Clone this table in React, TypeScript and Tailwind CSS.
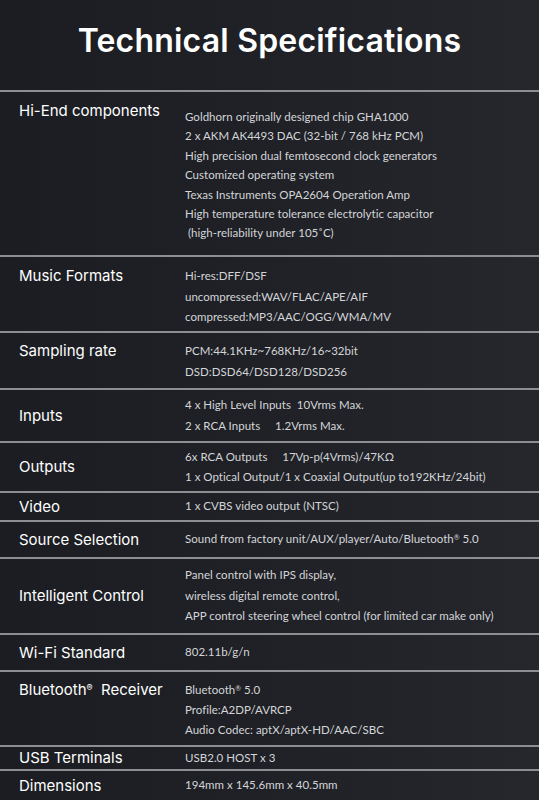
import React from "react";

type Row = {
  label: React.ReactNode;
  values: React.ReactNode[];
  h: string;
  align: "top" | "center";
  pt?: string;
  lh?: string;
  vpt?: string;
};

const rows: Row[] = [
  {
    label: "Hi-End components",
    values: [
      "Goldhorn originally designed chip GHA1000",
      "2 x AKM AK4493 DAC (32-bit / 768 kHz PCM)",
      "High precision dual femtosecond clock generators",
      "Customized operating system",
      "Texas Instruments OPA2604 Operation Amp",
      "High temperature tolerance electrolytic capacitor",
      " (high-reliability under 105˚C)",
    ],
    h: "h-[165px]",
    align: "top",
    pt: "pt-[9px]",
    lh: "leading-[19.4px]",
    vpt: "pt-[6px]",
  },
  {
    label: "Music Formats",
    values: [
      "Hi-res:DFF/DSF",
      "uncompressed:WAV/FLAC/APE/AIF",
      "compressed:MP3/AAC/OGG/WMA/MV",
    ],
    h: "h-[76px]",
    align: "top",
    pt: "pt-[9px]",
  },
  {
    label: "Sampling rate",
    values: ["PCM:44.1KHz~768KHz/16~32bit", "DSD:DSD64/DSD128/DSD256"],
    h: "h-[57px]",
    align: "top",
    pt: "pt-[8px]",
  },
  {
    label: "Inputs",
    values: ["4 x High Level Inputs  10Vrms Max.", "2 x RCA Inputs     1.2Vrms Max."],
    h: "h-[53px]",
    align: "center",
  },
  {
    label: "Outputs",
    values: [
      "6x RCA Outputs     17Vp-p(4Vrms)/47KΩ",
      "1 x Optical Output/1 x Coaxial Output(up to192KHz/24bit)",
    ],
    h: "h-[50px]",
    align: "center",
  },
  {
    label: "Video",
    values: ["1 x CVBS video output (NTSC)"],
    h: "h-[29px]",
    align: "center",
  },
  {
    label: "Source Selection",
    values: [
      <>
        Sound from factory unit/AUX/player/Auto/Bluetooth
        <sup className="text-[7px]">®</sup> 5.0
      </>,
    ],
    h: "h-[37px]",
    align: "center",
  },
  {
    label: "Intelligent Control",
    values: [
      "Panel control with IPS display,",
      "wireless digital remote control,",
      "APP control steering wheel control (for limited car make only)",
    ],
    h: "h-[76px]",
    align: "center",
  },
  {
    label: "Wi-Fi Standard",
    values: ["802.11b/g/n"],
    h: "h-[37px]",
    align: "center",
  },
  {
    label: (
      <>
        Bluetooth<sup className="text-[9px]">®</sup>
        {"  "}Receiver
      </>
    ),
    values: [
      <>
        Bluetooth<sup className="text-[7px]">®</sup> 5.0
      </>,
      "Profile:A2DP/AVRCP",
      "Audio Codec: aptX/aptX-HD/AAC/SBC",
    ],
    h: "h-[75px]",
    align: "top",
    pt: "pt-[8px]",
    lh: "leading-[20px]",
  },
  {
    label: "USB Terminals",
    values: ["USB2.0 HOST x 3"],
    h: "h-[24px]",
    align: "center",
  },
  {
    label: "Dimensions",
    values: ["194mm x 145.6mm x 40.5mm"],
    h: "h-[31px]",
    align: "center",
  },
];

export default function App() {
  return (
    <div className="w-[539px] h-[800px] overflow-hidden bg-gradient-to-r from-[#1b1d22] via-[#1f2126] to-[#25272d] text-white">
      <div className="h-[90px] flex items-center justify-center pb-[8px]">
        <h1
          className="text-[32px] font-semibold tracking-[0.2px] text-white"
          style={{ fontFamily: "Inter, 'Noto Sans', sans-serif" }}
        >
          Technical Specifications
        </h1>
      </div>
      {rows.map((r, i) => (
        <div
          key={i}
          className={`${r.h} border-t-2 border-[#8b8e93] flex ${
            r.align === "center" ? "items-center" : "items-start"
          } ${r.pt ?? ""}`}
        >
          <div
            className="w-[185px] shrink-0 pl-[19px] text-[15px] leading-[20px] text-white whitespace-pre"
            style={{ fontFamily: "Inter, 'Noto Sans', sans-serif" }}
          >
            {r.label}
          </div>
          <div
            className={`flex flex-col text-[11.5px] tracking-[0.02px] ${r.lh ?? "leading-[20.5px]"} ${r.vpt ?? ""} text-[#d4d5d8] whitespace-pre`}
            style={{ fontFamily: "Lato, 'Liberation Sans', sans-serif" }}
          >
            {r.values.map((v, j) => (
              <div key={j}>{v}</div>
            ))}
          </div>
        </div>
      ))}
    </div>
  );
}
